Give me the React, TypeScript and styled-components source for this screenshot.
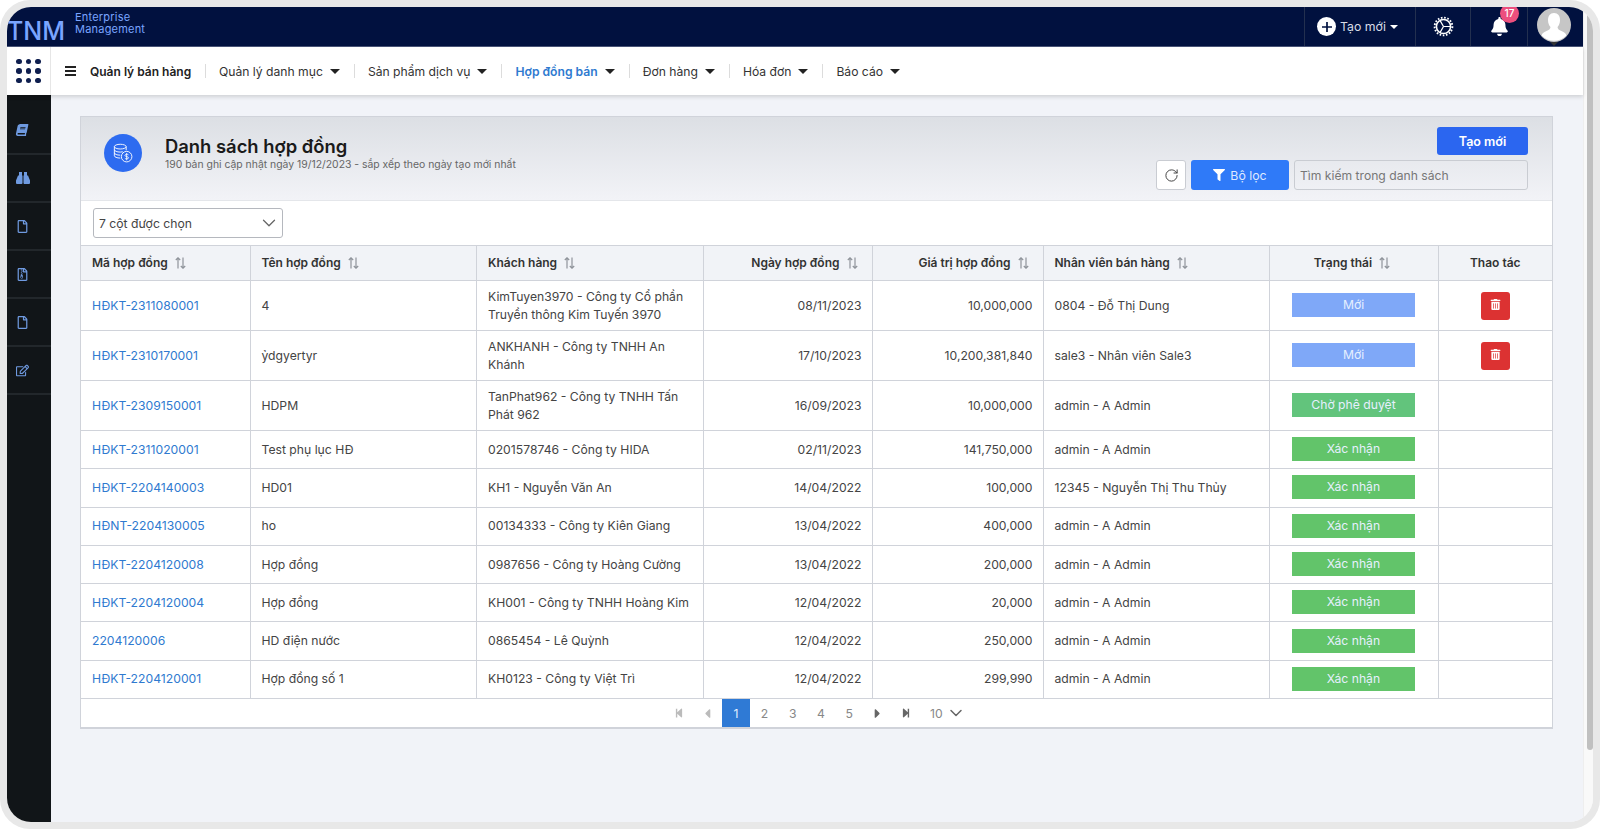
import styled, { createGlobalStyle } from 'styled-components';
import { ChevronDown, RotateCw } from 'lucide-react';
import {
    FaBell, FaBook, FaCaretLeft, FaCaretRight, FaFilter, FaRegEdit,
    FaRegFile, FaRegFileArchive, FaStepBackward, FaStepForward, FaTrashAlt,
} from 'react-icons/fa';

interface IContract {
    code: string,
    name: string,
    customer: string,
    date: string,
    value: string,
    seller: string,
    status: 'new' | 'pending' | 'ok',
}

const contracts: IContract[] = [
    { code: 'HĐKT-2311080001', name: '4', customer: 'KimTuyen3970 - Công ty Cổ phần Truyền thông Kim Tuyến 3970', date: '08/11/2023', value: '10,000,000', seller: '0804 - Đỗ Thị Dung', status: 'new' },
    { code: 'HĐKT-2310170001', name: 'ỷdgyertyr', customer: 'ANKHANH - Công ty TNHH An Khánh', date: '17/10/2023', value: '10,200,381,840', seller: 'sale3 - Nhân viên Sale3', status: 'new' },
    { code: 'HĐKT-2309150001', name: 'HDPM', customer: 'TanPhat962 - Công ty TNHH Tấn Phát 962', date: '16/09/2023', value: '10,000,000', seller: 'admin - A Admin', status: 'pending' },
    { code: 'HĐKT-2311020001', name: 'Test phụ lục HĐ', customer: '0201578746 - Công ty HIDA', date: '02/11/2023', value: '141,750,000', seller: 'admin - A Admin', status: 'ok' },
    { code: 'HĐKT-2204140003', name: 'HD01', customer: 'KH1 - Nguyễn Văn An', date: '14/04/2022', value: '100,000', seller: '12345 - Nguyễn Thị Thu Thủy', status: 'ok' },
    { code: 'HĐNT-2204130005', name: 'ho', customer: '00134333 - Công ty Kiên Giang', date: '13/04/2022', value: '400,000', seller: 'admin - A Admin', status: 'ok' },
    { code: 'HĐKT-2204120008', name: 'Hợp đồng', customer: '0987656 - Công ty Hoàng Cường', date: '13/04/2022', value: '200,000', seller: 'admin - A Admin', status: 'ok' },
    { code: 'HĐKT-2204120004', name: 'Hợp đồng', customer: 'KH001 - Công ty TNHH Hoàng Kim', date: '12/04/2022', value: '20,000', seller: 'admin - A Admin', status: 'ok' },
    { code: '2204120006', name: 'HD điện nước', customer: '0865454 - Lê Quỳnh', date: '12/04/2022', value: '250,000', seller: 'admin - A Admin', status: 'ok' },
    { code: 'HĐKT-2204120001', name: 'Hợp đồng số 1', customer: 'KH0123 - Công ty Việt Trì', date: '12/04/2022', value: '299,990', seller: 'admin - A Admin', status: 'ok' },
];

const statusLabel = { new: 'Mới', pending: 'Chờ phê duyệt', ok: 'Xác nhận' };
const statusColor = { new: '#7fa8f8', pending: '#62c47c', ok: '#62c46a' };

const menu = [
    { label: 'Quản lý danh mục' },
    { label: 'Sản phẩm dịch vụ' },
    { label: 'Hợp đồng bán', active: true },
    { label: 'Đơn hàng' },
    { label: 'Hóa đơn' },
    { label: 'Báo cáo' },
];

const columns = [
    { label: 'Mã hợp đồng', width: 169, sort: true },
    { label: 'Tên hợp đồng', width: 226.5, sort: true },
    { label: 'Khách hàng', width: 226.5, sort: true },
    { label: 'Ngày hợp đồng', width: 169, sort: true, align: 'right' },
    { label: 'Giá trị hợp đồng', width: 171, sort: true, align: 'right' },
    { label: 'Nhân viên bán hàng', width: 226, sort: true },
    { label: 'Trạng thái', width: 169, sort: true, align: 'center' },
    { label: 'Thao tác', width: 114, align: 'center' },
];

function SortIcon() {
    return (
        <SortSvg viewBox="0 0 11 12" width="11" height="12">
            <path d="M3 11.500V.8M.8 3L3 .8 5.200 3M8 .5v10.700M5.800 9L8 11.200 10.200 9" fill="none" stroke="#8f939a" strokeWidth="1.2" />
        </SortSvg>
    );
}

function GearIcon() {
    return (
        <svg viewBox="0 0 22 22" width="21" height="21" fill="none" stroke="#fff">
            <circle cx="11" cy="11" r="7.4" strokeWidth="1.6" />
            <circle cx="11" cy="11" r="9.3" strokeWidth="2" strokeDasharray="1.7 1.7" />
            <path d="M11 11h7.4M11 11L7.3 4.6M11 11l-3.700 6.400" strokeWidth="1.3" />
        </svg>
    );
}

function CoinsIcon() {
    return (
        <svg viewBox="0 0 22 22" width="20" height="20" fill="none" stroke="#fff" strokeWidth="1">
            <ellipse cx="8" cy="4" rx="6.5" ry="2.6" />
            <path d="M1.500 4v10c0 1.400 2.900 2.600 6.500 2.600M14.500 4v4M1.500 7.400c0 1.400 2.900 2.600 6.500 2.600 1 0 2-.1 2.800-.3M1.500 10.800c0 1.400 2.900 2.600 6.500 2.600" />
            <circle cx="15" cy="15" r="5.800" />
            <path d="M17 13c-.5-.8-3.800-1-3.900.7 0 1.700 4 .8 4 2.600 0 1.600-3.400 1.500-4.100.5M15 11v8" strokeWidth=".9" />
        </svg>
    );
}

function BinocularsIcon() {
    return (
        <svg viewBox="0 0 14 14" width="14" height="14" fill="currentColor">
            <path d="M3 1h3v3.500h.5V12a1 1 0 0 1-1 1H1a1 1 0 0 1-1-1V9.500L2 4.500h1zM8 1h3v3.500h1l2 5V12a1 1 0 0 1-1 1H8.500a1 1 0 0 1-1-1V4.500H8z" />
        </svg>
    );
}

function AvatarImage() {
    return (
        <svg viewBox="0 0 34 34" width="34" height="34">
            <circle cx="17" cy="17" r="17" fill="#c6c6c6" />
            <path d="M17 5c4 0 6 3 6 7 0 3-1 5.500-2.500 7 .2 2 1.500 3 4 4 3 1.200 4.500 2.500 4.800 4.500A17 17 0 0 1 4.700 27.500C5 25.500 6.500 24.200 9.500 23c2.500-1 3.800-2 4-4C12 17.500 11 15 11 12c0-4 2-7 6-7z" fill="#fff" />
        </svg>
    );
}

function App() {
    return (
        <>
            <GlobalStyle />
            <Frame>
                <AppWindow>
                    <Shell>
                        <TopBar>
                            <Logo>
                                <LogoMark>TNM</LogoMark>
                                <LogoText>Enterprise<br />Management</LogoText>
                            </Logo>
                            <TopActions>
                                <CreateAction>
                                    <PlusCircle>
                                        <svg viewBox="0 0 12 12" width="12" height="12">
                                            <path d="M6 1v10M1 6h10" stroke="#01113f" strokeWidth="1.7" />
                                        </svg>
                                    </PlusCircle>
                                    Tạo mới
                                    <Caret $size={4} $color="#fff" />
                                </CreateAction>
                                <TopAction $width={55}><GearIcon /></TopAction>
                                <TopAction $width={57}>
                                    <FaBell size={19} color="#fff" />
                                    <Badge>17</Badge>
                                </TopAction>
                                <AvatarAction>
                                    <AvatarImage />
                                    <AvatarArrow />
                                </AvatarAction>
                            </TopActions>
                        </TopBar>
                        <NavBar>
                            <AppsCell>
                                <DotsGrid>
                                    {Array.from({ length: 9 }).map((_, i) => <Dot key={i} />)}
                                </DotsGrid>
                            </AppsCell>
                            <Burger>
                                <span /><span /><span />
                            </Burger>
                            <ModuleName>Quản lý bán hàng</ModuleName>
                            <Menu>
                                {menu.map(m => (
                                    <MenuItem key={m.label} $active={m.active}>
                                        {m.label}
                                        <Caret $size={5} $color="#222" />
                                    </MenuItem>
                                ))}
                            </Menu>
                        </NavBar>
                        <Body>
                            <Sidebar>
                                <SideItem><TiltedBook><FaBook size={12} /></TiltedBook></SideItem>
                                <SideItem><BinocularsIcon /></SideItem>
                                <SideItem><FaRegFile size={13} /></SideItem>
                                <SideItem><FaRegFileArchive size={13} /></SideItem>
                                <SideItem><FaRegFile size={13} /></SideItem>
                                <SideItem><FaRegEdit size={13} /></SideItem>
                            </Sidebar>
                            <Content>
                                <Panel>
                                    <PanelHeader>
                                        <HeaderIcon><CoinsIcon /></HeaderIcon>
                                        <HeaderText>
                                            <Title>Danh sách hợp đồng</Title>
                                            <Subtitle>190 bản ghi cập nhật ngày 19/12/2023 - sắp xếp theo ngày tạo mới nhất</Subtitle>
                                        </HeaderText>
                                        <HeaderActions>
                                            <CreateButton>Tạo mới</CreateButton>
                                            <FilterRow>
                                                <RefreshButton><RotateCw size={15} strokeWidth={1.6} /></RefreshButton>
                                                <FilterButton><FaFilter size={12} color="#fff" />Bộ lọc</FilterButton>
                                                <SearchInput placeholder="Tìm kiếm trong danh sách" />
                                            </FilterRow>
                                        </HeaderActions>
                                    </PanelHeader>
                                    <Toolbar>
                                        <ColumnSelect>
                                            7 cột được chọn
                                            <ChevronDown size={22} strokeWidth={1.4} color="#666" />
                                        </ColumnSelect>
                                    </Toolbar>
                                    <Table>
                                        <colgroup>
                                            {columns.map(c => <col key={c.label} width={c.width} />)}
                                        </colgroup>
                                        <thead>
                                            <tr>
                                                {columns.map(c => (
                                                    <Th key={c.label} $align={c.align}>
                                                        {c.label}{c.sort && <SortIcon />}
                                                    </Th>
                                                ))}
                                            </tr>
                                        </thead>
                                        <tbody>
                                            {contracts.map((c, i) => (
                                                <Row key={c.code} $tall={i < 3}>
                                                    <Td><CodeLink>{c.code}</CodeLink></Td>
                                                    <Td>{c.name}</Td>
                                                    <Td>{c.customer}</Td>
                                                    <Td $align="right">{c.date}</Td>
                                                    <Td $align="right">{c.value}</Td>
                                                    <Td>{c.seller}</Td>
                                                    <Td $align="center">
                                                        <Status $color={statusColor[c.status]}>{statusLabel[c.status]}</Status>
                                                    </Td>
                                                    <Td $align="center">
                                                        {c.status === 'new' && <DeleteButton><FaTrashAlt size={11} /></DeleteButton>}
                                                    </Td>
                                                </Row>
                                            ))}
                                        </tbody>
                                    </Table>
                                    <Pager>
                                        <PageCell $muted><FaStepBackward size={10} /></PageCell>
                                        <PageCell $muted><FaCaretLeft size={15} /></PageCell>
                                        <PageCell $current>1</PageCell>
                                        <PageCell>2</PageCell>
                                        <PageCell>3</PageCell>
                                        <PageCell>4</PageCell>
                                        <PageCell>5</PageCell>
                                        <PageCell $dark><FaCaretRight size={15} /></PageCell>
                                        <PageCell $dark><FaStepForward size={10} /></PageCell>
                                        <PageSize>10<ChevronDown size={20} strokeWidth={1.8} color="#666" /></PageSize>
                                    </Pager>
                                </Panel>
                            </Content>
                        </Body>
                    </Shell>
                    <ScrollTrack><ScrollThumb /></ScrollTrack>
                </AppWindow>
            </Frame>
        </>
    );
}

const GlobalStyle = createGlobalStyle`
    html, body {
        margin: 0;
        background: #fff;
        font-family: Inter, "Liberation Sans", sans-serif;
        color: #333;
    }
    * {
        box-sizing: border-box;
    }
`;

const Frame = styled.div`
    height: 829px;
    overflow: hidden;
    background: #e8e8e8;
    border-radius: 30px;
    padding: 7px;
`;

const AppWindow = styled.div`
    display: flex;
    height: 100%;
    overflow: hidden;
    border-radius: 24px;
    background: #f8f8f8;
`;

const Shell = styled.div`
    flex: 1;
    min-width: 0;
    display: flex;
    flex-direction: column;
`;

const ScrollTrack = styled.div`
    width: 10px;
    background: #f9f9f9;
    border-left: 1px solid #eee;
`;

const ScrollThumb = styled.div`
    width: 6px;
    height: 743px;
    margin-left: 3px;
    border-radius: 0 0 3px 3px;
    background: #c0c0c0;
`;

const Caret = styled.span<{ $size: number, $color: string }>`
    flex: none;
    border-style: solid;
    border-color: transparent;
    border-width: ${p => p.$size}px ${p => p.$size}px 0;
    border-top-color: ${p => p.$color};
`;

const TopBar = styled.header`
    height: 40px;
    flex: none;
    display: flex;
    justify-content: space-between;
    background: #01113f;
    border-bottom: 1px solid #4a5578;
`;

const Logo = styled.div`
    display: flex;
    align-items: flex-start;
    color: #7aa5ff;
    overflow: hidden;
`;

const LogoMark = styled.div`
    margin-top: 9px;
    font-size: 25px;
    line-height: 30px;
    font-weight: 500;
`;

const LogoText = styled.div`
    margin: 5px 0 0 10px;
    font-size: 11px;
    line-height: 11.500px;
    letter-spacing: .2px;
`;

const TopActions = styled.div`
    display: flex;
`;

const TopAction = styled.div<{ $width: number }>`
    position: relative;
    width: ${p => p.$width}px;
    display: flex;
    align-items: center;
    justify-content: center;
    border-left: 1px solid #23304f;
`;

const CreateAction = styled.div`
    width: 111px;
    display: flex;
    align-items: center;
    gap: 4px;
    padding-left: 12px;
    font-size: 12.300px;
    color: #d8dce6;
    border-left: 1px solid #23304f;
`;

const PlusCircle = styled.span`
    width: 19px;
    height: 19px;
    border-radius: 50%;
    background: #fff;
    display: flex;
    align-items: center;
    justify-content: center;
`;

const Badge = styled.span`
    position: absolute;
    top: -3px;
    left: 29px;
    width: 19px;
    height: 19px;
    border-radius: 50%;
    background: #ec4f7e;
    color: #fff;
    font-size: 10px;
    font-weight: 500;
    line-height: 19px;
    text-align: center;
`;

const AvatarAction = styled.div`
    position: relative;
    width: 56px;
    padding: 1px 0 0 9px;
    border-left: 1px solid #23304f;
`;

const AvatarArrow = styled.span`
    position: absolute;
    left: 22px;
    bottom: 0;
    border: 4px solid transparent;
    border-bottom-width: 0;
    border-top-color: #333;
`;

const NavBar = styled.nav`
    height: 48px;
    flex: none;
    position: relative;
    display: flex;
    align-items: center;
    background: #fff;
    box-shadow: 0 2px 4px rgba(0, 0, 0, .14);
`;

const AppsCell = styled.div`
    width: 44px;
    height: 100%;
    display: flex;
    align-items: center;
    justify-content: center;
    border-right: 1px solid #e6e6e6;
`;

const DotsGrid = styled.div`
    display: grid;
    grid-template-columns: repeat(3, 5.500px);
    gap: 4px;
`;

const Dot = styled.span`
    width: 5.500px;
    height: 5.500px;
    border-radius: 50%;
    background: #0f1f4f;
`;

const Burger = styled.div`
    width: 11px;
    margin: 0 14px;
    display: flex;
    flex-direction: column;
    gap: 2px;
    span {
        height: 2px;
        background: #222;
    }
`;

const ModuleName = styled.div`
    width: 115px;
    font-size: 12px;
    font-weight: 600;
    color: #222;
`;

const Menu = styled.div`
    display: flex;
    align-items: center;
`;

const MenuItem = styled.div<{ $active?: boolean }>`
    display: flex;
    align-items: center;
    gap: 7px;
    height: 14px;
    padding: 0 14px 0 13px;
    font-size: 12.150px;
    border-left: 1px solid #dcdcdc;
    color: ${p => p.$active ? '#2f7ad0' : '#333'};
    font-weight: ${p => p.$active ? 600 : 400};
`;

const Body = styled.div`
    flex: 1;
    min-height: 0;
    display: flex;
`;

const Sidebar = styled.aside`
    width: 44px;
    flex: none;
    padding-top: 12px;
    background: #111518;
    color: #6f9ae0;
`;

const SideItem = styled.div`
    height: 48px;
    padding-left: 9px;
    display: flex;
    align-items: center;
    border-bottom: 2px solid #22272b;
`;

const TiltedBook = styled.span`
    display: flex;
    transform: skewX(-12deg);
`;

const Content = styled.main`
    flex: 1;
    min-width: 0;
    padding: 21px 30px 0 29px;
    background: #f1f3f8;
`;

const Panel = styled.section`
    background: #fff;
    border: 1px solid #d0d3da;
    border-bottom-width: 2px;
`;

const PanelHeader = styled.div`
    height: 84px;
    display: flex;
    padding: 10px 24px 0 23px;
    background: linear-gradient(180deg, #dcdfe4 0%, #f2f3f7 100%);
    border-bottom: 1px solid #e4e6ea;
`;

const HeaderIcon = styled.div`
    width: 38px;
    height: 38px;
    margin-top: 7px;
    border-radius: 50%;
    background: #2d6bf0;
    display: flex;
    align-items: center;
    justify-content: center;
`;

const HeaderText = styled.div`
    flex: 1;
    margin: 7px 0 0 23px;
`;

const Title = styled.h1`
    margin: 0;
    font-size: 18.400px;
    line-height: 24px;
    font-weight: 600;
    color: #1a1a1a;
`;

const Subtitle = styled.div`
    font-size: 10.400px;
    line-height: 13px;
    color: #666;
`;

const HeaderActions = styled.div`
    display: flex;
    flex-direction: column;
    align-items: flex-end;
    gap: 5px;
`;

const CreateButton = styled.button`
    width: 91px;
    height: 28px;
    border: 0;
    border-radius: 3px;
    background: #2b66f0;
    color: #fff;
    font: 600 12.500px Inter, sans-serif;
`;

const FilterRow = styled.div`
    display: flex;
    gap: 5px;
`;

const RefreshButton = styled.button`
    width: 30px;
    height: 30px;
    padding: 0;
    display: flex;
    align-items: center;
    justify-content: center;
    border: 1px solid #c9ccd2;
    border-radius: 3px;
    background: #fff;
    color: #444;
`;

const FilterButton = styled.button`
    width: 98px;
    height: 30px;
    display: flex;
    align-items: center;
    justify-content: center;
    gap: 5px;
    border: 0;
    border-radius: 3px;
    background: #2f7af8;
    color: #dfe9ff;
    font: 400 12.300px Inter, sans-serif;
`;

const SearchInput = styled.input`
    width: 234px;
    height: 30px;
    padding: 0 5px;
    border: 1px solid #c9ccd2;
    border-radius: 3px;
    background: transparent;
    font: 400 12.150px Inter, sans-serif;
    &::placeholder {
        color: #777;
    }
`;

const Toolbar = styled.div`
    height: 44px;
    padding: 7px 12px;
`;

const ColumnSelect = styled.div`
    width: 190px;
    height: 30px;
    display: flex;
    align-items: center;
    justify-content: space-between;
    padding: 0 2px 0 5px;
    border: 1px solid #b5b8be;
    border-radius: 3px;
    font-size: 12.200px;
    color: #444;
`;

const Table = styled.table`
    width: 100%;
    table-layout: fixed;
    border-collapse: collapse;
    font-size: 12.200px;
    line-height: 18px;
`;

const Th = styled.th<{ $align?: string }>`
    height: 35px;
    padding: 0 14px 0 11px;
    background: #f1f3f7;
    border: 1px solid #d0d3da;
    font-size: 12px;
    font-weight: 600;
    color: #333;
    text-align: ${p => p.$align || 'left'};
    &:first-child {
        border-left: 0;
    }
    &:last-child {
        padding-right: 11px;
        border-right: 0;
    }
`;

const SortSvg = styled.svg`
    margin-left: 7px;
    vertical-align: -1.500px;
`;

const Row = styled.tr<{ $tall?: boolean }>`
    height: ${p => p.$tall ? 50 : 38.3}px;
`;

const Td = styled.td<{ $align?: string }>`
    padding: 0 ${p => p.$align === 'right' ? 10 : 11}px 0 11px;
    border: 1px solid #d0d3da;
    color: #444;
    text-align: ${p => p.$align || 'left'};
    &:first-child {
        border-left: 0;
    }
    &:last-child {
        border-right: 0;
    }
`;

const CodeLink = styled.a`
    color: #2f7ad0;
`;

const Status = styled.div<{ $color: string }>`
    width: 123px;
    height: 24px;
    margin: -1px auto 0;
    background: ${p => p.$color};
    color: #e6f0ff;
    line-height: 24px;
    text-align: center;
`;

const DeleteButton = styled.button`
    width: 29px;
    height: 28px;
    padding: 0;
    border: 0;
    border-radius: 3px;
    background: #dc3232;
    color: #fff;
    vertical-align: middle;
`;

const Pager = styled.div`
    height: 28px;
    padding-right: 2px;
    display: flex;
    align-items: center;
    justify-content: center;
    font-size: 12.200px;
`;

const PageCell = styled.span<{ $current?: boolean, $muted?: boolean, $dark?: boolean }>`
    width: 28.300px;
    height: 28px;
    display: flex;
    align-items: center;
    justify-content: center;
    background: ${p => p.$current ? '#2f7ad5' : 'transparent'};
    color: ${p => p.$current ? '#e6f0ff' : p.$muted ? '#bbb' : p.$dark ? '#666' : '#888'};
`;

const PageSize = styled.div`
    display: flex;
    align-items: center;
    gap: 3px;
    margin-left: 10px;
    color: #888;
`;

export default App;
